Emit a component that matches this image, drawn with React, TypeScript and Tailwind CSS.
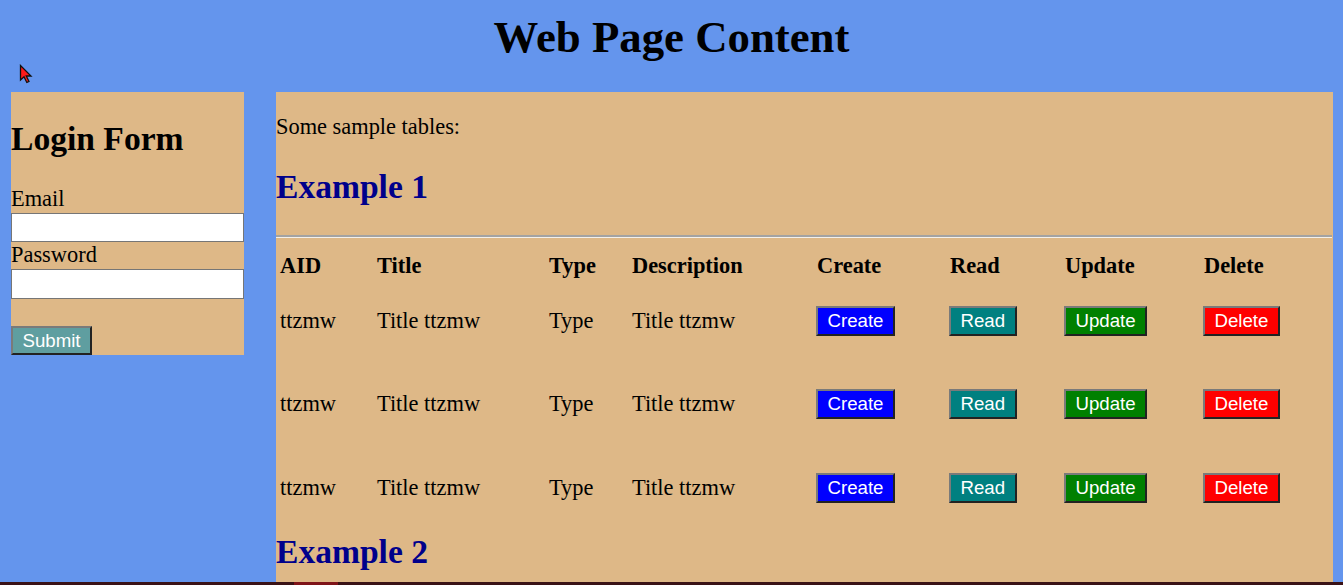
import type { ReactNode } from 'react';

const rows = ['ttzmw', 'ttzmw', 'ttzmw'];

function ActionButton({ children, color }: { children: ReactNode; color: string }) {
  return (
    <button
      type="button"
      className={`mt-[1px] flex h-[30px] items-center justify-center border-2 border-t-[#7a7a7a] border-l-[#7a7a7a] border-r-[#222] border-b-[#222] px-[9.5px] font-['Liberation_Sans',Arial,sans-serif] text-[18.67px] leading-[22px] text-white ${color}`}
    >
      {children}
    </button>
  );
}

function Cursor() {
  return (
    <svg width="14" height="20" viewBox="0 0 14 20" className="ml-[19px] mt-[2px]">
      <path
        d="M1.5 1.5 L1.5 16 L5 12.8 L7.8 18.5 L10 17.4 L7.3 12 L12 12 Z"
        fill="#ff1a1a"
        stroke="#111"
        strokeWidth="1.3"
        strokeLinejoin="miter"
      />
    </svg>
  );
}

export default function App() {
  return (
    <div className="flex h-[585px] w-[1343px] flex-col overflow-hidden bg-[#6495ED] font-['Liberation_Serif',serif] text-black">
      <h1 className="pt-[12px] text-center text-[44.8px] font-bold leading-[50px]">Web Page Content</h1>
      <div className="h-[30px]">
        <Cursor />
      </div>

      <div className="flex h-[490px] items-start pl-[11px]">
        {/* login panel */}
        <div className="flex w-[233px] flex-col bg-[#DEB887]">
          <h2 className="mt-[28px] text-[33.6px] font-bold leading-[37px]">Login Form</h2>
          <label className="mt-[29.4px] text-[22.4px] leading-[25px]">Email</label>
          <input className="mt-[1.7px] h-[29.4px] w-full border border-[#767676] bg-white" />
          <label className="text-[22.4px] leading-[25px]">Password</label>
          <input type="password" className="mt-[1.7px] h-[29.8px] w-full border border-[#767676] bg-white" />
          <button
            type="button"
            className="mt-[27px] flex h-[29.5px] w-[81px] items-center justify-center border-2 border-t-[#7a7a7a] border-l-[#7a7a7a] border-r-[#222] border-b-[#222] bg-[#5F9EA0] font-['Liberation_Sans',Arial,sans-serif] text-[18.67px] leading-[22px] text-white"
          >
            Submit
          </button>
        </div>

        {/* content panel */}
        <div className="ml-[32px] flex h-[490px] w-[1057px] flex-col bg-[#DEB887]">
          <p className="pt-[22.4px] text-[22.4px] leading-[25px]">Some sample tables:</p>
          <h2 className="mt-[29.1px] text-[33.6px] font-bold leading-[37px] text-[#00008B]">Example 1</h2>
          <div className="mt-[29.5px] w-[1056px]">
            <div className="h-[2px] bg-[#a3a3a3]" />
            <div className="h-[1.5px] bg-[#f4f0ea]" />
          </div>

          <div className="mt-[13px] grid h-[27.1px] grid-cols-[97px_172px_83px_184px_133px_115px_139px_1fr] items-center pl-[4px] text-[22.4px] font-bold leading-[25px]">
            <div>AID</div>
            <div>Title</div>
            <div>Type</div>
            <div>Description</div>
            <div className="pl-[1px]">Create</div>
            <div className="pl-[1px]">Read</div>
            <div className="pl-[1px]">Update</div>
            <div className="pl-[1px]">Delete</div>
          </div>

          {rows.map((r, i) => (
            <div
              key={i}
              className="grid h-[83.5px] grid-cols-[97px_172px_83px_184px_133px_115px_139px_1fr] items-center pl-[4px] text-[22.4px] leading-[25px]"
            >
              <div>{r}</div>
              <div>Title {r}</div>
              <div>Type</div>
              <div>Title {r}</div>
              <div className="flex">
                <ActionButton color="bg-[#0000FF]">Create</ActionButton>
              </div>
              <div className="flex">
                <ActionButton color="bg-[#008080]">Read</ActionButton>
              </div>
              <div className="flex">
                <ActionButton color="bg-[#008000]">Update</ActionButton>
              </div>
              <div className="flex">
                <ActionButton color="bg-[#FF0000]">Delete</ActionButton>
              </div>
            </div>
          ))}

          <h2 className="mt-[3.8px] text-[33.6px] font-bold leading-[37px] text-[#00008B]">Example 2</h2>
        </div>
      </div>

      <div className="flex h-[3px] bg-[#3a1216]">
        <div className="ml-[294px] w-[44px] bg-[#7f1419]" />
      </div>
    </div>
  );
}
